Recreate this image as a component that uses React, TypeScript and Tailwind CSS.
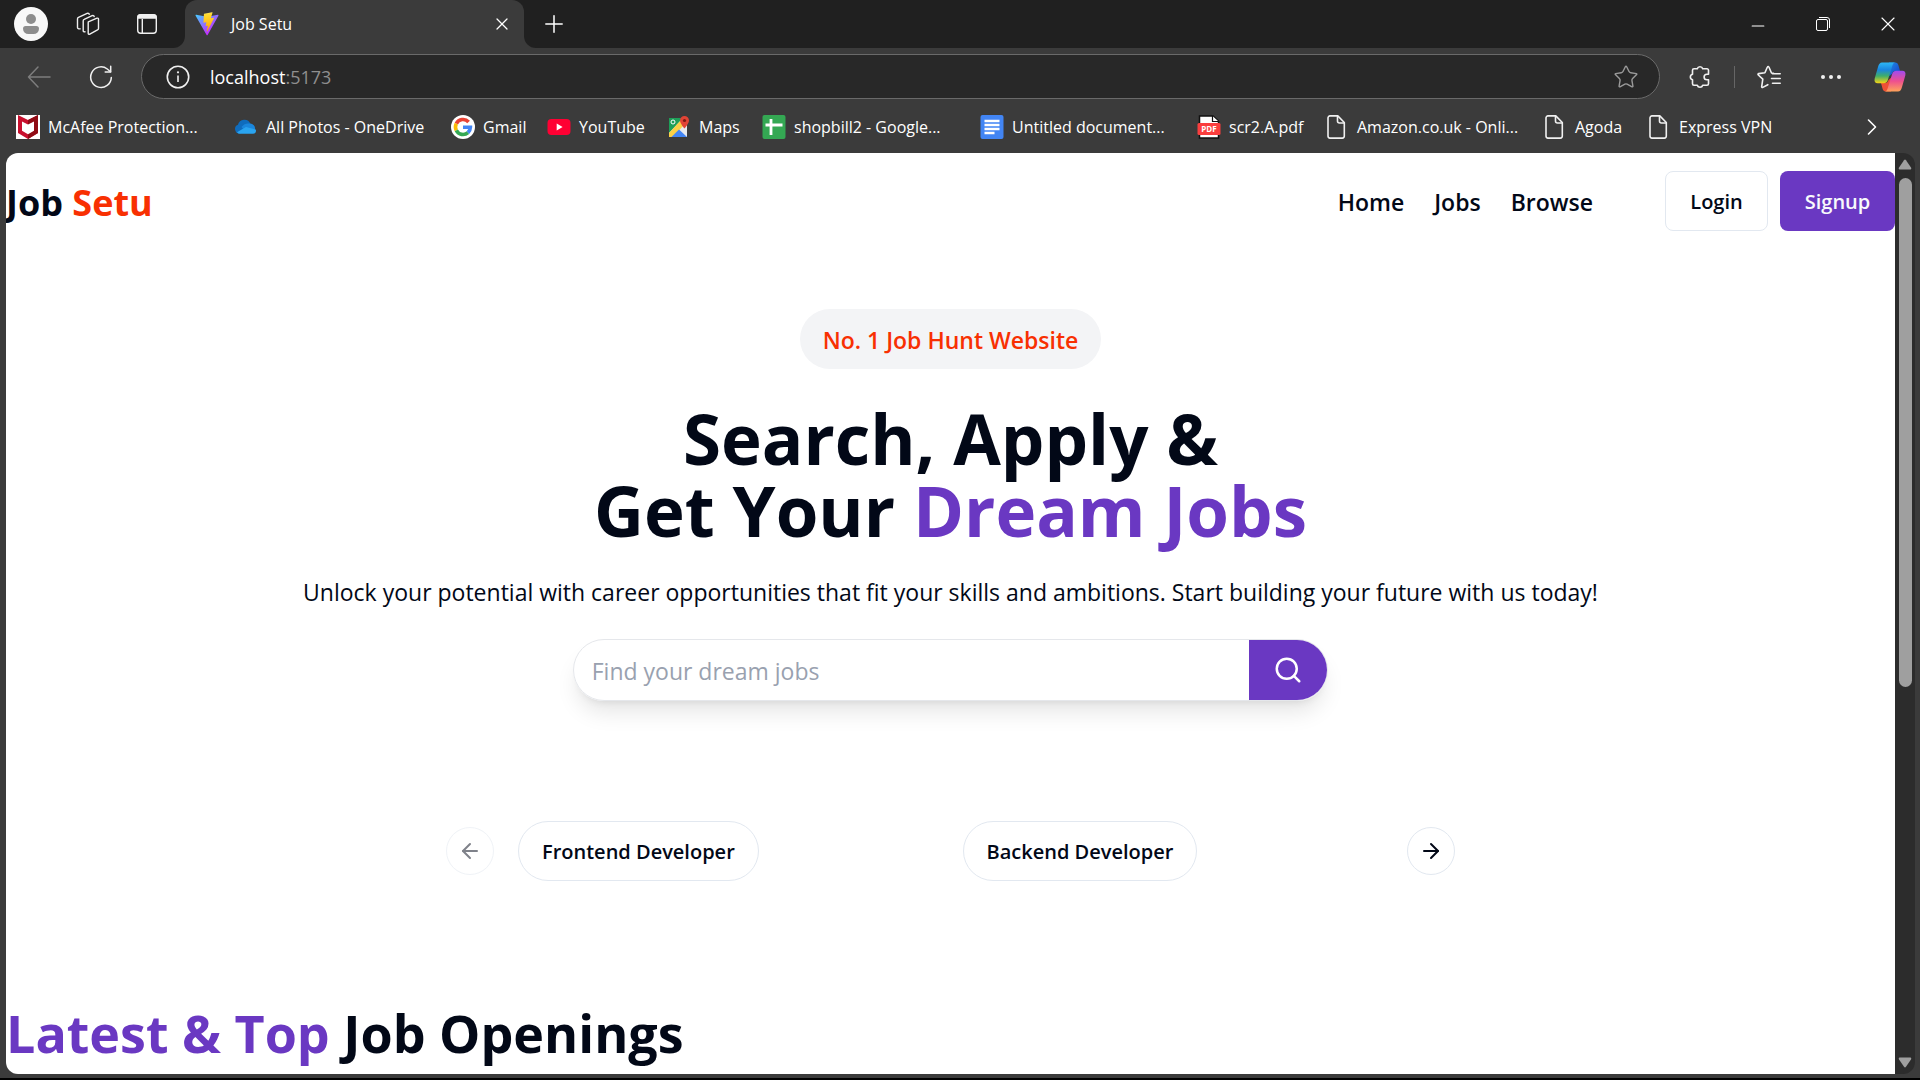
import type { ReactNode } from "react";
import { ArrowLeft, ArrowRight, ChevronRight, Minus, Plus, Search, Star, X } from "lucide-react";

const ViteLogo = () => (
  <svg viewBox="0 0 410 404" className="size-6">
    <defs>
      <linearGradient id="viteA" x1="6" y1="33" x2="235" y2="344" gradientUnits="userSpaceOnUse">
        <stop stopColor="#41D1FF" />
        <stop offset="1" stopColor="#BD34FE" />
      </linearGradient>
      <linearGradient id="viteB" x1="194.651" y1="8.818" x2="236.076" y2="292.989" gradientUnits="userSpaceOnUse">
        <stop stopColor="#FFEA83" />
        <stop offset="0.083" stopColor="#FFDD35" />
        <stop offset="1" stopColor="#FFA800" />
      </linearGradient>
    </defs>
    <path
      fill="url(#viteA)"
      d="M399.641 59.525 215.643 388.545c-3.799 6.793-13.559 6.833-17.415.073L10.582 59.556C6.38 52.19 12.68 43.267 21.028 44.76l184.195 32.923c1.175.21 2.378.208 3.553-.006l180.343-32.87c8.32-1.517 14.649 7.337 10.522 14.719Z"
    />
    <path
      fill="url(#viteB)"
      d="M292.965 1.574 156.801 28.255a5 5 0 0 0-4.03 4.611l-8.376 141.464c-.197 3.332 2.863 5.918 6.115 5.168l37.91-8.749c3.547-.818 6.752 2.306 6.023 5.873l-11.263 55.153c-.758 3.712 2.727 6.886 6.352 5.785l23.415-7.114c3.63-1.102 7.118 2.081 6.35 5.796l-17.899 86.633c-1.12 5.419 6.088 8.374 9.094 3.728l2.008-3.103 110.954-221.428c1.858-3.707-1.346-7.935-5.418-7.15l-39.022 7.532c-3.667.707-6.787-2.708-5.752-6.296l25.469-88.291c1.036-3.594-2.095-7.012-5.766-6.293Z"
    />
  </svg>
);

const WorkspacesIcon = () => (
  <svg viewBox="0 0 24 24" className="size-6" fill="none" stroke="#f0f0f0" strokeWidth="1.4" strokeLinejoin="round" strokeLinecap="round">
    <path d="M12.3 9.800 21 6.200c.9-.3 1.500.2 1.500 1v9.200c0 .7-.3 1.200-1 1.500l-7.700 4.200c-1 .4-1.600 0-1.600-.9v-10c0-.6.1-1 .1-1.400Z" />
    <path d="M9 19.800c-1 .2-1.800-.3-1.800-1.100V8.900c0-.8.3-1.300 1-1.600l7.900-3.600c1-.4 1.900-.1 2.100.8" />
    <path d="M4.200 16.900C2.500 17 1.500 16.500 1.500 15.500V6.900c0-.8.300-1.300 1-1.600l8.600-3.900c1-.4 1.900-.1 2.200.8" />
  </svg>
);

const TabActionsIcon = () => (
  <svg viewBox="0 0 22 22" className="size-[22px]" fill="none" stroke="#f0f0f0" strokeWidth="1.4">
    <rect x="1.700" y="1.700" width="18.600" height="18.600" rx="3" />
    <path d="M2 5V4a2 2 0 0 1 2-2h14a2 2 0 0 1 2 2v1Z" fill="#f0f0f0" />
    <path d="M6.300 6v14" />
  </svg>
);

const RefreshIcon = () => (
  <svg viewBox="0 0 24 24" className="size-6" fill="none" stroke="#f0f0f0" strokeWidth="1.500" strokeLinecap="round" strokeLinejoin="round">
    <path d="M22.300 12.600A10.300 10.300 0 1 1 18.300 4l3.200 2.700" />
    <path d="M21.700 1.300v5.600h-5.500" />
  </svg>
);

const InfoIcon = () => (
  <svg viewBox="0 0 24 24" className="size-6" fill="none" stroke="#f0f0f0" strokeWidth="1.600">
    <circle cx="12" cy="12" r="10.700" />
    <path d="M12 10.500V17" />
    <circle cx="12" cy="7.300" r="1.100" fill="#f0f0f0" stroke="none" />
  </svg>
);

const ExtensionsIcon = () => (
  <svg viewBox="0 0 24 24" className="size-6" fill="none" stroke="#f0f0f0" strokeWidth="1.600" strokeLinejoin="round">
    <path d="M6 3.800h3.300a2.800 2.800 0 0 1 5.400 0H19a1.500 1.500 0 0 1 1.500 1.500v3.900h-1.600a2.800 2.800 0 0 0 0 5.600h1.600v3.900a1.500 1.500 0 0 1-1.500 1.500h-4.300a2.800 2.800 0 0 1-5.400 0H6a1.500 1.500 0 0 1-1.500-1.500v-3.900a2.900 2.900 0 0 1 0-5.600V5.300A1.500 1.500 0 0 1 6 3.800Z" />
  </svg>
);

const FavoritesIcon = () => (
  <svg viewBox="0 0 24 24" className="size-6" fill="none" stroke="#f0f0f0" strokeWidth="1.600" strokeLinejoin="round" strokeLinecap="round">
    <path d="M16.500 8.300 14.500 8l-2.600-6a.8.8 0 0 0-1.500 0L7.900 7.700l-6.200.9a.8.8 0 0 0-.4 1.400l4.500 4.200-1.100 7.400c-.1.700.5 1.100 1.100.8l5-2.700" />
    <path d="M15.500 8.700h7.700M14.500 13.500h8.700M15.500 18.300h7.700" />
  </svg>
);

const CopilotIcon = () => (
  <svg viewBox="0 0 32 32" className="size-8">
    <defs>
      <linearGradient id="cpA" x1="0" y1="0" x2="0" y2="1">
        <stop stopColor="#2db7f5" />
        <stop offset="0.350" stopColor="#1a86e0" />
        <stop offset="0.650" stopColor="#3fae6a" />
        <stop offset="1" stopColor="#f6d416" />
      </linearGradient>
      <linearGradient id="cpB" x1="0" y1="0" x2="0" y2="1">
        <stop stopColor="#a04bf0" />
        <stop offset="0.500" stopColor="#ee4f8f" />
        <stop offset="1" stopColor="#ffa35a" />
      </linearGradient>
      <linearGradient id="cpC" x1="0" y1="0" x2="1" y2="1">
        <stop stopColor="#1f8fe6" />
        <stop offset="1" stopColor="#1638c8" />
      </linearGradient>
    </defs>
    <path d="M15 1.500h6c2 0 3 1.200 3.500 3L26 10h-4.500c-2 0-3 1-3.600 3L14 16Z" fill="url(#cpC)" />
    <path d="M17 30.500h-5c-2 0-3-1.200-3.500-3L7 22h4c2 0 3-1 3.500-3l3.500-3Z" fill="#ee5136" />
    <path d="M8 1.500h13.500c-1.600 0-2.600 1.200-3.100 3L14 18.500c-.7 2.500-2 3.700-4.500 3.700H3.700c-2.600 0-3.700-1.700-3-4.700L4 6c.8-3 2-4.500 4-4.500Z" fill="url(#cpA)" />
    <path d="M24 30.500H10.500c1.600 0 2.600-1.200 3.100-3L18 13.500c.7-2.500 2-3.700 4.500-3.700h5.800c2.600 0 3.700 1.700 3 4.700L28 26c-.8 3-2 4.500-4 4.500Z" fill="url(#cpB)" />
  </svg>
);

const McAfeeIcon = () => (
  <svg viewBox="0 0 24 24" className="size-6">
    <path d="M0 0h24v24H0Z" fill="#fff" />
    <path d="M2 0 12 5 22 0v18l-10 6-10-6Z" fill="#c8102e" />
    <path d="M22 0 12 5v19l10-6Z" fill="#8f0b14" />
    <path d="m6 6.500 6 3 6-3v9.300l-6 3.400-6-3.400Z" fill="#fff" />
  </svg>
);

const OneDriveIcon = () => (
  <svg viewBox="0 0 24 24" className="size-6">
    <path d="M6 18.500a4.500 4.500 0 0 1-2-8.700A6.500 6.500 0 0 1 16.500 9L10 16Z" fill="#0f6cbd" />
    <path d="M15.700 8.600a5 5 0 0 1 5.300 5.900L12 17.500 7.500 12c2.500-3 5-4 8.200-3.400Z" fill="#1a86dc" />
    <path d="M3 17.200 12 12l9.700 2.500a3 3 0 0 1-2.700 4.300H6a4 4 0 0 1-3-1.600Z" fill="#2aa4f0" />
  </svg>
);

const GoogleIcon = () => (
  <svg viewBox="0 0 24 24" className="size-6">
    <circle cx="12" cy="12" r="12" fill="#fff" />
    <g fill="none" strokeWidth="3.600">
      <path d="M17.600 7A7.500 7.500 0 0 0 5.300 8.600" stroke="#ea4335" />
      <path d="M5.300 8.600a7.500 7.500 0 0 0 0 6.800" stroke="#fbbc05" />
      <path d="M5.300 15.400a7.500 7.500 0 0 0 11.700 2.200" stroke="#34a853" />
      <path d="M17 17.600a7.500 7.500 0 0 0 2.400-5.300H12" stroke="#4285f4" />
    </g>
  </svg>
);

const YouTubeIcon = () => (
  <svg viewBox="0 0 24 24" className="size-6">
    <rect x="0.500" y="4" width="23" height="16" rx="4" fill="#f03" />
    <path d="M9.700 8.600v6.800l5.900-3.400Z" fill="#fff" />
  </svg>
);

const MapsIcon = () => (
  <svg viewBox="0 0 24 24" className="size-6">
    <path d="M2 3h18v19H2Z" fill="#e8eaed" />
    <path d="M2 3h14L2 18Z" fill="#1e9e58" />
    <path d="M2 18 16 3l4 4L5.500 22H2Z" fill="#fbd045" />
    <path d="M4.500 22 12 14.500l8 7.500Z" fill="#4285f4" />
    <circle cx="6" cy="7" r="2" fill="none" stroke="#fff" />
    <path d="M17.500 1a4.500 4.500 0 0 1 4.500 4.500c0 3-4.500 8-4.500 8s-4.500-5-4.500-8A4.500 4.500 0 0 1 17.500 1Z" fill="#e14335" />
    <circle cx="17.500" cy="5.500" r="1.600" fill="#7b1a12" />
  </svg>
);

const SheetsIcon = () => (
  <svg viewBox="0 0 24 24" className="size-6">
    <rect x="0.500" width="23" height="24" rx="2" fill="#34a853" />
    <path d="M9 4v16M3.500 10h17" stroke="#fff" strokeWidth="2.800" />
  </svg>
);

const DocsIcon = () => (
  <svg viewBox="0 0 24 24" className="size-6">
    <rect x="0.500" width="23" height="24" rx="2" fill="#4285f4" />
    <path d="M4.500 6h15M4.500 10h15M4.500 14h15M4.500 18h10" stroke="#fff" strokeWidth="2.300" />
  </svg>
);

const PdfIcon = () => (
  <svg viewBox="0 0 24 24" className="size-6">
    <path d="M2.500 1H16l5.500 5v17h-19Z" fill="#fff" stroke="#111" strokeWidth="1.500" />
    <path d="M15.500 1v5.500h6" fill="#fff" stroke="#111" strokeWidth="1.200" />
    <rect x="0.500" y="8" width="23" height="12" rx="1.500" fill="#fa3e3e" />
    <text x="12" y="17" textAnchor="middle" fontSize="8" fontWeight="700" fill="#fff" fontFamily="Open Sans, sans-serif">
      PDF
    </text>
  </svg>
);

const PageIcon = () => (
  <svg viewBox="0 0 24 24" className="size-6" fill="none" stroke="#f0f0f0" strokeWidth="1.600" strokeLinejoin="round">
    <path d="M5 .900h7.800l6.500 6.600v13.600a2 2 0 0 1-2 2H5a2 2 0 0 1-2-2V2.900a2 2 0 0 1 2-2Z" />
    <path d="M12.500 1v5a2 2 0 0 0 2 2h4.700" />
  </svg>
);

const bookmarks: { label: string; icon: ReactNode; width: string }[] = [
  { label: "McAfee Protection...", icon: <McAfeeIcon />, width: "w-[162px]" },
  { label: "All Photos - OneDrive", icon: <OneDriveIcon />, width: "w-[161px]" },
  { label: "Gmail", icon: <GoogleIcon />, width: "w-10" },
  { label: "YouTube", icon: <YouTubeIcon />, width: "w-16" },
  { label: "Maps", icon: <MapsIcon />, width: "w-[39px]" },
  { label: "shopbill2 - Google...", icon: <SheetsIcon />, width: "w-[162px]" },
  { label: "Untitled document...", icon: <DocsIcon />, width: "w-[161px]" },
  { label: "scr2.A.pdf", icon: <PdfIcon />, width: "w-[72px]" },
  { label: "Amazon.co.uk - Onli...", icon: <PageIcon />, width: "w-[162px]" },
  { label: "Agoda", icon: <PageIcon />, width: "w-12" },
  { label: "Express VPN", icon: <PageIcon />, width: "w-24" },
];

function TabStrip() {
  return (
    <div className="flex h-12 shrink-0 bg-[#3b3b3b]">
      <div className="flex w-[185px] items-center rounded-br-xl bg-[#202020] pl-[14px]">
        <button aria-label="Profile" className="flex size-[34px] flex-col items-center justify-center gap-0.5 rounded-full bg-[#f8f8f8]">
          <span className="size-[10px] rounded-full bg-[#8d8d8d]" />
          <span className="h-2 w-4 rounded-t-sm rounded-b-lg bg-[#8d8d8d]" />
        </button>
        <button aria-label="Workspaces" className="ml-7">
          <WorkspacesIcon />
        </button>
        <button aria-label="Tab actions" className="ml-9">
          <TabActionsIcon />
        </button>
      </div>
      <div className="flex bg-[#202020]">
        <div className="flex w-[339px] items-center rounded-t-xl bg-[#3b3b3b] pr-3 pl-[10px] text-base text-white">
          <ViteLogo />
          <span className="ml-3 flex-1">Job Setu</span>
          <button aria-label="Close tab">
            <X className="size-5" strokeWidth={1.5} />
          </button>
        </div>
      </div>
      <div className="flex flex-1 items-center rounded-bl-xl bg-[#202020] pl-4 text-white">
        <button aria-label="New tab">
          <Plus className="size-7" strokeWidth={1.3} />
        </button>
        <div className="ml-auto flex items-center">
          <button aria-label="Minimize" className="flex w-[65px] justify-center pt-1">
            <Minus className="size-5" strokeWidth={1.3} />
          </button>
          <button aria-label="Restore" className="flex w-[65px] justify-center">
            <svg viewBox="0 0 16 16" className="size-4" fill="none" stroke="currentColor">
              <rect x="1.500" y="3.500" width="11" height="11" rx="1.500" />
              <path d="M4 1.500h8a2.500 2.500 0 0 1 2.500 2.500v8" />
            </svg>
          </button>
          <button aria-label="Close window" className="flex w-[65px] justify-center">
            <X className="size-6" strokeWidth={1.1} />
          </button>
        </div>
      </div>
    </div>
  );
}

function Toolbar() {
  return (
    <div className="flex h-[57px] shrink-0 items-center pr-[14px] pl-[27px]">
      <button aria-label="Back" disabled className="text-[#7d7d7d]">
        <svg viewBox="0 0 24 24" className="size-6" fill="none" stroke="currentColor" strokeWidth="1.500" strokeLinecap="round" strokeLinejoin="round">
          <path d="M23 12H1.500M11 2 1.500 12 11 22" />
        </svg>
      </button>
      <button aria-label="Refresh" className="ml-[38px]">
        <RefreshIcon />
      </button>
      <div className="ml-7 flex h-[45px] flex-1 items-center rounded-full border border-[#6a6a6a] bg-[#282828] pr-5 pl-6 text-lg">
        <InfoIcon />
        <span className="ml-5 flex-1 text-white">
          localhost<span className="text-[#8f8f8f]">:5173</span>
        </span>
        <button aria-label="Add to favorites">
          <Star className="size-[26px] text-[#9a9a9a]" strokeWidth={1.3} />
        </button>
      </div>
      <button aria-label="Extensions" className="ml-7">
        <ExtensionsIcon />
      </button>
      <span className="ml-[22px] h-[22px] w-px bg-[#666]" />
      <button aria-label="Favorites" className="ml-[22px]">
        <FavoritesIcon />
      </button>
      <button aria-label="Settings and more" className="ml-10 flex w-5 justify-between">
        <span className="size-1 rounded-full bg-[#f0f0f0]" />
        <span className="size-1 rounded-full bg-[#f0f0f0]" />
        <span className="size-1 rounded-full bg-[#f0f0f0]" />
      </button>
      <button aria-label="Copilot" className="ml-[33px]">
        <CopilotIcon />
      </button>
    </div>
  );
}

function BookmarksBar() {
  return (
    <nav className="flex h-12 shrink-0 items-center gap-6 pr-[34px] pb-1 pl-4 text-base text-white">
      {bookmarks.map((b) => (
        <a key={b.label} href="#" className="flex shrink-0 items-center gap-2 whitespace-nowrap">
          {b.icon}
          <span className={b.width}>{b.label}</span>
        </a>
      ))}
      <button aria-label="More bookmarks" className="ml-auto">
        <ChevronRight className="size-7" strokeWidth={1.4} />
      </button>
    </nav>
  );
}

function Navbar() {
  return (
    <header className="flex h-24 items-center justify-between">
      <h1 className="pt-1 text-4xl font-bold">
        Job <span className="text-[#F83002]">Setu</span>
      </h1>
      <div className="flex items-center gap-[72px] font-semibold">
        <ul className="flex items-center gap-[30px] pt-0.5 text-[23px]">
          <li><a href="#">Home</a></li>
          <li><a href="#">Jobs</a></li>
          <li><a href="#">Browse</a></li>
        </ul>
        <div className="flex items-center gap-3 text-xl">
          <button className="h-[60px] w-[103px] rounded-lg border border-slate-200 pt-0.5">Login</button>
          <button className="h-[60px] w-[115px] rounded-lg bg-[#6A38C2] pt-0.5 text-slate-50">Signup</button>
        </div>
      </div>
    </header>
  );
}

function HeroSection() {
  return (
    <section className="my-[60px] flex flex-col items-center gap-[30px] text-center">
      <span className="rounded-full bg-gray-100 px-[23px] pt-[13px] pb-[11px] text-[23px] leading-9 font-semibold text-[#F83002]">
        No. 1 Job Hunt Website
      </span>
      <h2 className="pt-[3px] text-[69px] leading-[72px] font-bold">
        Search, Apply & <br /> Get Your <span className="text-[#6A38C2]">Dream Jobs</span>
      </h2>
      <p className="text-[23px] leading-[33px]">
        Unlock your potential with career opportunities that fit your skills and ambitions. Start building your future with us today!
      </p>
      <form className="flex h-[62px] w-2/5 rounded-full border border-gray-200 pl-[18px] shadow-[0_15px_22px_-4px_rgba(0,0,0,0.1),0_6px_9px_-6px_rgba(0,0,0,0.1)]">
        <input
          type="text"
          aria-label="Find your dream jobs"
          placeholder="Find your dream jobs"
          className="min-w-0 flex-1 pt-0.5 text-[23px] outline-none placeholder:text-gray-400"
        />
        <button type="button" aria-label="Search" className="flex w-[78px] items-center justify-center rounded-r-full bg-[#6A38C2] text-white">
          <Search className="size-[30px]" />
        </button>
      </form>
    </section>
  );
}

function CategoryCarousel() {
  return (
    <section className="my-[120px] flex items-center justify-center gap-6">
      <button aria-label="Previous slide" disabled className="flex size-12 items-center justify-center rounded-full border border-slate-200 opacity-50">
        <ArrowLeft className="size-6" />
      </button>
      <div className="grid w-[865px] grid-cols-2 gap-6 text-xl font-semibold">
        {["Frontend Developer", "Backend Developer"].map((category) => (
          <div key={category}>
            <button className="h-[60px] rounded-full border border-slate-200 px-[23px] pt-0.5">{category}</button>
          </div>
        ))}
      </div>
      <button aria-label="Next slide" className="flex size-12 items-center justify-center rounded-full border border-slate-200">
        <ArrowRight className="size-6" />
      </button>
    </section>
  );
}

function Scrollbar() {
  return (
    <div className="flex w-5 shrink-0 flex-col items-center bg-[#2c2c2c] pt-1.5 pb-1.5">
      <svg viewBox="0 0 14 11" className="h-[11px] w-[14px]">
        <path d="M6 1.200a1.300 1.300 0 0 1 2 0l5 7.300c.6 1 .2 2-1 2H2c-1.200 0-1.600-1-1-2Z" fill="#9f9f9f" />
      </svg>
      <div className="mt-2 h-[56%] w-[13px] rounded-full bg-[#9f9f9f]" />
      <svg viewBox="0 0 14 11" className="mt-auto h-[11px] w-[14px] rotate-180">
        <path d="M6 1.200a1.300 1.300 0 0 1 2 0l5 7.300c.6 1 .2 2-1 2H2c-1.200 0-1.600-1-1-2Z" fill="#9f9f9f" />
      </svg>
    </div>
  );
}

export default function App() {
  return (
    <div className="flex h-screen flex-col overflow-hidden border-b-2 border-black bg-[#3b3b3b] font-['Open_Sans',sans-serif]">
      <TabStrip />
      <Toolbar />
      <BookmarksBar />
      <div className="mr-[5px] mb-1 ml-1.5 flex min-h-0 flex-1 overflow-hidden rounded-xl">
        <main className="min-w-0 flex-1 overflow-hidden bg-white text-[#020817]">
          <Navbar />
          <HeroSection />
          <CategoryCarousel />
          <h2 className="pt-0.5 text-[52px] leading-[60px] font-bold">
            <span className="text-[#6A38C2]">Latest & Top </span> Job Openings
          </h2>
        </main>
        <Scrollbar />
      </div>
    </div>
  );
}
